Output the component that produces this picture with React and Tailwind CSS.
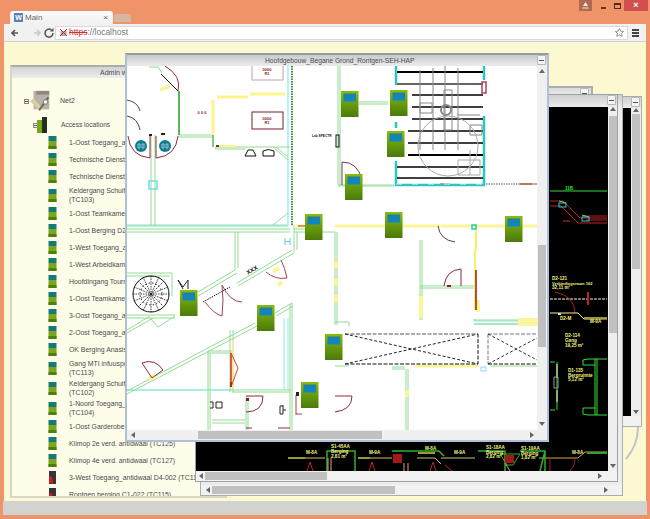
import React from "react";

const font = { fontFamily: '"Liberation Sans", Arial, sans-serif' };

const rows = [
  { t: ["1-Oost Toegang_antidwaal (TC101)"], h: "h-[17px]" },
  { t: ["Technische Dienst Toegang (TC105)"], h: "h-[17px]" },
  { t: ["Technische Dienst Berging (TC106)"], h: "h-[17px]" },
  { t: ["Keldergang Schuifdeur Noord", "(TC103)"], h: "h-[20px]" },
  { t: ["1-Oost Teamkamer (TC107)"], h: "h-[17px]" },
  { t: ["1-Oost Berging D2-112"], h: "h-[17px]" },
  { t: ["1-West Toegang_antidwaal"], h: "h-[17px]" },
  { t: ["1-West Arbeidkamer"], h: "h-[17px]" },
  { t: ["Hoofdingang Tourniquet"], h: "h-[17px]" },
  { t: ["1-Oost Teamkamer 2"], h: "h-[17px]" },
  { t: ["3-Oost Toegang_antidwaal"], h: "h-[17px]" },
  { t: ["2-Oost Toegang_antidwaal"], h: "h-[17px]" },
  { t: ["OK Berging Anasis"], h: "h-[17px]" },
  { t: ["Gang MTI infuuspomp", "(TC113)"], h: "h-[20px]" },
  { t: ["Keldergang Schuifdeur Zuid", "(TC102)"], h: "h-[20px]" },
  { t: ["1-Noord Toegang_antidwaal", "(TC104)"], h: "h-[20px]" },
  { t: ["1-Oost Garderobe"], h: "h-[17px]" },
  { t: ["Klimop 2e verd. antidwaal (TC125)"], h: "h-[17px]" },
  { t: ["Klimop 4e verd. antidwaal (TC127)"], h: "h-[17px]" },
  { t: ["3-West Toegang_antidwaal D4-002 (TC114)"], h: "h-[17px]", red: true },
  { t: ["Rontgen berging C1-022 (TC115)"], h: "h-[17px]", red: true },
];

function ControllerIcon({ red }) {
  return (
    <svg width="9" height="13" viewBox="0 0 9 13" className="shrink-0">
      {red ? (
        <>
          <rect x="1" y="0" width="7" height="13" fill="#3a3238" />
          <path d="M1 5 L4 6 L5 13 L1 12 Z" fill="#d81820" />
        </>
      ) : (
        <>
          <rect x="0.5" y="0" width="8" height="5" fill="#167a76" />
          <rect x="0.5" y="5" width="8" height="8" fill="#7ba51c" />
          <rect x="0.5" y="10" width="8" height="3" fill="#4f7d10" />
        </>
      )}
    </svg>
  );
}

function Minus() {
  return (
    <div className="w-[9px] h-[10px] bg-[#f4f4f4] border border-[#b8b8b8] rounded-[1px] flex items-center justify-center">
      <div className="w-[5px] h-[1px] bg-[#555]" />
    </div>
  );
}

function Tri({ dir }) {
  const p = { up: "0,4 3,0 6,4", down: "0,0 6,0 3,4", left: "4,0 4,6 0,3", right: "0,0 0,6 4,3" }[dir];
  return (
    <svg width="6" height="6" viewBox="0 0 6 6" className="shrink-0">
      <polygon points={p} fill="#666" />
    </svg>
  );
}

function Controller({ x, y }) {
  return (
    <g>
      <rect x={x} y={y} width="17.5" height="26" fill="url(#ctl)" />
      <rect x={x + 2.5} y={y + 2.5} width="12.5" height="8" fill="url(#scr)" />
    </g>
  );
}

const ctrls = [
  [341, 91], [390, 90], [387, 131], [345, 174], [385, 212], [505, 216], [305, 214],
  [180, 290], [257, 305], [325, 334], [301, 382],
];

const gL = [
  "M149 67H158L162 73", "M155 135V225M151 135V225", "M179 135H213M179 137H213", "M127 226H288", "M127 229H290M127 232H290",
  "M215 147H290M215 149H245", "M273 147L288 160M276 147L288 157", "M273 225L288 213", "M235 232V270M238 232V268",
  "M338 66V185M340 66V185", "M338 185H394M338 186H394", "M359 102H388M359 104H388",
  "M294 232H335M294 229H310", "M294 225V252M297 232V250",
  "M335 232V325M337 232V325", "M335 322L349 322V326", "M420 240V320M422 240V320", "M420 286H474M420 288H474",
  "M474 320H537M474 324H537", "M392 367H405M392 369H405", "M406 369V430M408 369V430", "M490 366H537", "M335 366H349",
  "M127 273H172V296M127 276H170", "M127 315H175M127 318H175", "M127 330L150 316M127 333L153 318", "M150 318L158 327L175 316",
  "M198 292L235 270M198 296L237 273", "M237 283L292 250M238 286L294 253",
  "M127 391L255 323M127 394L257 326", "M275 313L292 303M276 316L293 306",
  "M290 304V430M292 303V430", "M208 351H232M208 353H232", "M208 351V431M210 353V431", "M230 330V392M233 330V392", "M232 392H290M232 390H290",
  "M212 420H245M212 423H245", "M246 396V431M248 396V431",
];

export default function App() {
  return (
    <div style={font} className="w-[650px] h-[519px] bg-[#ef9468] overflow-hidden flex flex-col text-[#4b4b4b]">
      {/* title strip with tabs */}
      <div className="h-[24px] shrink-0 flex items-end justify-between pl-[10px] relative">
        <div className="flex items-end">
          <div className="w-[103px] h-[13px] bg-gradient-to-b from-[#fbfbfb] to-[#f1f1f1] rounded-t-[3px] flex items-center pl-[4px] gap-[2px]">
            <div className="w-[9px] h-[9px] bg-[#5b7fb5] text-white text-[7px] leading-[9px] text-center font-bold">W</div>
            <span className="text-[8px] text-[#666] flex-1">Main</span>
            <span className="text-[8px] text-[#555] mr-[5px]">×</span>
          </div>
          <div className="w-[17px] h-[8px] bg-[#d8b5a0] rounded-t-[2px] ml-[1px] mb-[2px]" />
        </div>
        <div className="absolute top-0 right-[2px] flex h-[11px] items-stretch">
          <div className="w-[13px] bg-[#b06a50] flex items-center justify-center mr-[5px]">
            <svg width="7" height="7" viewBox="0 0 7 7"><path d="M3.5 0L6 4H1Z M0.5 5.5H6.5V6.5H0.5Z" fill="#eee" /></svg>
          </div>
          <div className="w-[13px] flex items-end justify-center pb-[2px]"><div className="w-[5px] h-[2px] bg-[#7a2a10]" /></div>
          <div className="w-[14px] flex items-center justify-center"><div className="w-[7px] h-[6px] border border-[#5a2a18] border-t-2" /></div>
          <div className="w-[24px] bg-[#d34f4f] flex items-center justify-center text-white text-[9px] font-bold leading-none">×</div>
        </div>
      </div>

      {/* toolbar */}
      <div className="h-[18px] shrink-0 mx-[4px] bg-[#f1f1f1] flex items-center pl-[5px] pr-[3px] border-b border-[#cfcfcf]">
        <svg width="46" height="12" viewBox="0 0 46 12" className="shrink-0">
          <path d="M9 6H3M6 3L3 6L6 9" fill="none" stroke="#555" strokeWidth="1.6" />
          <path d="M25 6H31M28 3L31 6L28 9" fill="none" stroke="#c9c9c9" strokeWidth="1.6" />
          <path d="M44 6A4 4 0 1 1 42.5 3" fill="none" stroke="#555" strokeWidth="1.5" />
          <path d="M44.5 1V4.5H41Z" fill="#555" />
        </svg>
        <div className="w-[573px] h-[14px] bg-white border border-[#d8d8d8] flex items-center pl-[3px] pr-[2px] gap-[1px]">
          <svg width="9" height="9" viewBox="0 0 9 9" className="shrink-0">
            <rect x="1.5" y="3" width="6" height="5" fill="#aaa" />
            <path d="M1 1L8 8M8 1L1 8" stroke="#c22" strokeWidth="1" />
          </svg>
          <span className="text-[8.5px] leading-none text-[#777] flex-1">
            <span className="text-[#c33] line-through">https</span>://localhost
          </span>
          <svg width="11" height="11" viewBox="0 0 24 24" className="shrink-0">
            <path d="M12 3l2.8 6 6.4.7-4.8 4.3 1.4 6.4L12 17l-5.8 3.4 1.4-6.4L2.8 9.7 9.200 9z" fill="none" stroke="#888" strokeWidth="2" />
          </svg>
        </div>
        <div className="flex flex-col gap-[1px] ml-[4px]">
          <div className="w-[7px] h-[2px] bg-[#444]" />
          <div className="w-[7px] h-[2px] bg-[#444]" />
          <div className="w-[7px] h-[2px] bg-[#444]" />
        </div>
      </div>

      {/* page */}
      <div className="flex-1 min-h-0 mx-[4px] bg-[#fcf9d2] relative pl-[6px] pt-[23px] pr-[6px] overflow-hidden">
        {/* admin */}
        <div className="h-[433px] w-[217px] border-2 border-[#d4d6cf] border-t-[#a8aeae] bg-[#fdfdea] overflow-hidden">
          <div className="h-[11px] bg-gradient-to-b from-[#d2d2d2] to-[#eeeeee] pl-[88px] text-[7px] leading-[11px] whitespace-nowrap">Admin window</div>
          <div className="h-[30px] mt-[8px] flex items-center pl-[12px]">
            <div className="w-[5px] h-[5px] border border-[#888] flex items-center justify-center shrink-0"><div className="w-[3px] h-[1px] bg-[#555]" /></div>
            <svg width="24" height="25" viewBox="0 0 26 25" className="shrink-0 -ml-[1px]">
              <rect x="6" y="1" width="17" height="20" fill="#b9b2a4" />
              <rect x="9" y="1" width="14" height="4" fill="#8f8a80" />
              <path d="M2 12L13 23L16 20L6 9Z" fill="#d9cfa2" />
              <path d="M22 8L12 22" stroke="#666" strokeWidth="2" />
              <circle cx="19" cy="13" r="2.500" fill="#eee" stroke="#777" />
            </svg>
            <span className="ml-[8px] text-[7px]">Net2</span>
          </div>
          <div className="h-[18px] flex items-center pl-[21px]">
            <div className="w-[5px] h-[5px] border border-[#888] flex items-center justify-center shrink-0"><div className="w-[3px] h-[1px] bg-[#555]" /></div>
            <svg width="10" height="16" viewBox="0 0 10 16" className="shrink-0 -ml-[1px]">
              <rect x="0" y="3" width="6" height="13" fill="#77a81c" />
              <rect x="5" y="0" width="5" height="16" fill="#26301e" />
            </svg>
            <span className="ml-[14px] text-[6.6px]">Access locations</span>
          </div>
          {rows.map((r, i) => (
            <div key={i} className={`${r.h} flex items-center pl-[36px]`}>
              <ControllerIcon red={r.red} />
              <div className="ml-[12px] text-[6.9px] leading-[9px] whitespace-nowrap">
                {r.t.map((l) => (
                  <div key={l}>{l}</div>
                ))}
              </div>
            </div>
          ))}
        </div>

        {/* decorative arc behind the windows */}
        <svg className="absolute left-[610px] top-[375px]" width="34" height="50" viewBox="0 0 34 50">
          <path d="M24 10Q24 28 12 42" fill="none" stroke="#bcc6c8" strokeWidth="2" />
        </svg>

        {/* back window, top strip */}
        <div className="absolute left-[296px] top-[44px] w-[293px] h-[200px] border-2 border-[#a9afae] bg-[#ececec]">
          <div className="h-[12px] bg-gradient-to-b from-[#dcdcdc] to-[#f1f1f1] flex justify-end pr-[2px]"><Minus /></div>
        </div>

        {/* far right window */}
        <div className="absolute left-[396px] top-[54px] w-[242px] h-[331px] border border-[#a9afae] bg-[#ececec] flex flex-col">
          <div className="h-[11px] shrink-0 bg-gradient-to-b from-[#cfcfcf] to-[#ececec] flex justify-end pr-[1px]"><Minus /></div>
          <div className="flex-1 min-h-0 flex pr-[1px]">
            <div className="flex-1 bg-black" />
            <div className="w-[9px] bg-[#eeeeee] flex flex-col items-center">
              <Tri dir="up" />
              <div className="w-[8px] h-[155px] bg-[#c0c0c0]" />
              <div className="flex-1" />
              <Tri dir="down" />
            </div>
          </div>
          <div className="h-[10px] shrink-0 bg-[#f2f2f2]" />
        </div>

        {/* third window */}
        <div className="absolute left-[196px] top-[52px] w-[423px] h-[402px] border border-[#a9afae] bg-[#ececec] flex flex-col">
          <div className="h-[12px] shrink-0 bg-gradient-to-b from-[#cfcfcf] to-[#ececec]" />
          <div className="flex-1 min-h-0 flex">
            <div className="flex-1" />
            <div className="w-[9px] pt-[78px]"><div className="w-[5px] h-[102px] bg-[#c8c8c8]" /></div>
          </div>
          <div className="h-[10px] shrink-0 bg-[#f2f2f2] flex items-center pl-[5px]">
            <Tri dir="left" />
            <div className="w-[183px] h-[8px] bg-[#c0c0c0]" />
            <div className="flex-1" />
            <div className="mr-[12px]"><Tri dir="right" /></div>
          </div>
        </div>

        {/* black drawing window */}
        <div className="absolute left-[191px] top-[52px] w-[423px] h-[388px] border border-[#9aa3a5] bg-[#ececec] flex flex-col">
          <div className="h-[12px] shrink-0 bg-gradient-to-b from-[#cfcfcf] to-[#ececec] flex justify-end pr-[1px]"><Minus /></div>
          <div className="flex-1 min-h-0 flex">
            <svg width="412" height="364" viewBox="196 107 412 364" className="bg-black shrink-0" style={font}>
              <g fill="none">
                <path d="M550 191H607" stroke="#35e035" />
                <path d="M550 201H563L580 218H607M550 206H561L578 223H607" stroke="#c02424" />
                <path d="M582 216H607M586 220H607" stroke="#b02020" />
                <rect x="559" y="203" width="7" height="4" stroke="#35c5d5" />
                <rect x="582" y="217" width="7" height="4" stroke="#35c5d5" />
                <path d="M559 201L566 203M582 215L589 217" stroke="#5ce05c" />
                <path d="M563 221H570" stroke="#d03030" />
                <path d="M550 299H607" stroke="#f6f6f6" strokeDasharray="3 1" />
                <path d="M555 292Q575 296 575 313" stroke="#b02020" />
                <path d="M588 292V305" stroke="#c02020" strokeWidth="2" />
                <path d="M550 313H578L584 319H607" stroke="#f0f0a0" />
                <path d="M584 318H607" stroke="#9a9a30" strokeWidth="2" />
                <path d="M595 359V415M597 359V415" stroke="#35e035" />
                <path d="M607 359H588L583 360V365H595M607 415H588L583 414V408H595" stroke="#35e035" />
                <path d="M557 362V410M555 410H550M555 362H550" stroke="#35e035" />
                <path d="M557 364V378M557 390V402" stroke="#eee" strokeWidth="1" />
                <path d="M554 377H558V388H554Z" stroke="#99a" />
                <path d="M539 458H578L585 452H607" stroke="#d0a840" />
                <path d="M587 453H607" stroke="#2f9f2f" strokeWidth="2" />
                <path d="M550 458V471M575 458Q575 466 570 471" stroke="#a01c1c" />
                <path d="M288 458H325M358 458H392M417 458H435L441 464M441 458H475" stroke="#d0c078" />
                <path d="M288 458H305M358 458H370M418 453H435" stroke="#9a9a30" strokeWidth="2" />
                <path d="M327 471V451H355V471" stroke="#2faf2f" strokeWidth="1.500" />
                <path d="M392 451H439L444 456M478 451H505V471M520 451H545V471M545 451L540 471" stroke="#2faf2f" strokeWidth="1.500" />
                <path d="M328 458V471M331 458V471M404 463V471M408 463V471M505 463L510 471" stroke="#e0a080" />
                <path d="M307 471L310 462L313 471M369 471L372 462L375 471M430 471L433 462L436 471M445 465L452 471" stroke="#c02020" />
                <path d="M500 454H520L513 465H507Z" stroke="#2faf2f" />
              </g>
              <rect x="393" y="454" width="9" height="9" fill="#a01818" />
              <rect x="505" y="455" width="9" height="8" fill="#a01818" />
              <rect x="558" y="313" width="3" height="2" fill="#ddd" />
              <g fill="#f4f480" fontSize="4.600" fontWeight="bold">
                <text x="552" y="280">D2-121</text>
                <text x="552" y="284.500" fontSize="4">Verbindingsraum 162</text>
                <text x="552" y="289">32,11 m²</text>
                <text x="565" y="337">D2-114</text>
                <text x="565" y="342">Gang</text>
                <text x="565" y="347">19,25 m²</text>
                <text x="568" y="372">D1-135</text>
                <text x="568" y="377">Bergruimte</text>
                <text x="568" y="381">5,12 m²</text>
                <text x="560" y="320">D2-M</text>
                <text x="590" y="323">M-9A</text>
                <text x="331" y="448">S1-45AA</text>
                <text x="331" y="453">Berging</text>
                <text x="331" y="458">2,81 m²</text>
                <text x="306" y="454">M-8A</text>
                <text x="369" y="454">M-9A</text>
                <text x="425" y="450">M-8A</text>
                <text x="454" y="454">M-9A</text>
                <text x="486" y="449">S1-18AA</text>
                <text x="486" y="454">Berging</text>
                <text x="486" y="458">2,82 m²</text>
                <text x="521" y="450">S1-19AA</text>
                <text x="521" y="455">Berging</text>
                <text x="521" y="459">1,82 m²</text>
                <text x="572" y="454">M-8A</text>
              </g>
              <text x="565" y="190" fill="#40e040" fontSize="4.600" fontWeight="bold">11B</text>
            </svg>
            <div className="w-[9px] bg-[#eeeeee] flex flex-col items-center">
              <Tri dir="up" />
              <div className="w-[8px] h-[217px] bg-[#c0c0c0] mt-[3px]" />
              <div className="flex-1" />
              <div className="mb-[1px]"><Tri dir="down" /></div>
            </div>
          </div>
          <div className="h-[10px] shrink-0 bg-[#f2f2f2] flex items-center pl-[3px]">
            <Tri dir="left" />
            <div className="w-[122px] h-[8px] bg-[#c0c0c0]" />
            <div className="flex-1" />
            <div className="mr-[13px]"><Tri dir="right" /></div>
          </div>
        </div>

        {/* main floor plan window */}
        <div className="absolute left-[121px] top-[11px] w-[424px] h-[389px] border-2 border-[#aebfd8] border-t-[#8f9ea2] bg-[#ececec] flex flex-col">
          <div className="h-[11px] shrink-0 bg-gradient-to-b from-[#c9c9c9] to-[#ececec] relative pl-[138px] text-[6.7px] leading-[11px] whitespace-nowrap">
            Hoofdgebouw_Begane Grond_Rontgen-SEH-HAP
            <div className="absolute right-[1px] top-0"><Minus /></div>
          </div>
          <div className="flex-1 min-h-0 flex">
            <svg width="410" height="365" viewBox="127 66 410 365" className="bg-white shrink-0" style={font}>
              <defs>
                <linearGradient id="ctl" x1="0" y1="0" x2="0" y2="1">
                  <stop offset="0" stopColor="#86bd10" />
                  <stop offset="1" stopColor="#4a7a0a" />
                </linearGradient>
                <linearGradient id="scr" x1="0" y1="0" x2="0" y2="1">
                  <stop offset="0" stopColor="#1f7f9f" />
                  <stop offset="1" stopColor="#0a88cc" />
                </linearGradient>
              </defs>
              <g fill="none">
                {/* light cyan walls */}
                <path d="M288 66V225H127" stroke="#9ff0f0" strokeWidth="1.500" />
                <rect x="149" y="181" width="8" height="8" stroke="#66e0e8" strokeWidth="1.500" />
                <path d="M127 390H232" stroke="#88e8e0" strokeWidth="1.500" />
                <path d="M284 318V390M288 318V390" stroke="#88e8f0" />
                <path d="M474 321V319" stroke="#66e0e8" />
                <path d="M474 321H520M474 324H520" stroke="#88e0e0" />
                {/* green walls */}
                {gL.map((d, i) => (
                  <path key={i} d={d} stroke="#93dc93" />
                ))}
                <path d="M179 91V135" stroke="#57b957" strokeWidth="2" />
                <path d="M213 135V147" stroke="#57b957" strokeWidth="1.500" />
                <path d="M292 66V225" stroke="#3e8f3e" strokeWidth="2" strokeDasharray="1.500 1" />
                {/* yellow */}
                <path d="M213 100V135M217 97H248M250 94H285" stroke="#fdf58a" strokeWidth="3" />
                <path d="M216 146H236" stroke="#fdf58a" strokeWidth="2" />
                <path d="M296 226H305M335 226H537" stroke="#fbf59a" strokeWidth="3" />
                <path d="M475 250V310M476 226V250" stroke="#fbf060" strokeWidth="2" />
                <path d="M518 322H537" stroke="#fbf59a" strokeWidth="8" />
                <path d="M415 366H478" stroke="#fbf59a" strokeWidth="3" />
                <path d="M336 262V268M336 279V285M336 295V302M421 296V318M407 390V397M478 300V312" stroke="#fbf59a" strokeWidth="4" />
                <path d="M149 379L156 375M273 272L279 268M278 285L282 282M160 90L170 86" stroke="#fbf59a" strokeWidth="4" />
                <path d="M233 340V388" stroke="#fbe8a0" strokeWidth="2" />
                {/* doors */}
                <path d="M161 74L178 91" stroke="#111" />
                <path d="M165 66Q182 76 178 91" stroke="#8e2a35" />
                <path d="M127 100Q138 102 140 111M127 116Q138 118 140 130" stroke="#6d3a40" />
                <path d="M128 136Q130 156 150 158V136M156 136V158Q176 156 178 136" stroke="#8e2a35" />
                <path d="M342 185V162Q358 162 362 180" stroke="#6d3a40" />
                <path d="M203 302L230 287" stroke="#111" strokeDasharray="1.500 1" />
                <path d="M205 302Q214 314 222 316Q224 300 222 285Q230 302 242 302" stroke="#a04550" />
                <path d="M266 272Q275 280 287 278Q285 268 281 260" stroke="#a04550" />
                <path d="M142 363Q155 358 163 370L152 378Z" stroke="#8e2a35" />
                <path d="M246 396H263Q263 412 246 412" stroke="#8e2a35" />
                <path d="M246 428H252M278 428H290" stroke="#8e2a35" />
                <path d="M296 395V415M296 414H302" stroke="#a04550" />
                <path d="M438 226Q440 240 455 242" stroke="#6d3a40" />
                <path d="M444 286Q446 270 461 269V286" stroke="#8e2a35" />
                <path d="M335 396H352Q352 410 335 412" stroke="#8e2a35" />
                <path d="M231 353V387L238 368Z" stroke="#d04a28" />
                <path d="M231 353V387" stroke="#d04a28" strokeWidth="1.500" />
                <path d="M476 270V310" stroke="#a01818" strokeWidth="1.500" />
                <path d="M298 226H305M440 184H450M520 184H532" stroke="#b03a20" />
                {/* pink rooms */}
                <rect x="252" y="60" width="31" height="20" stroke="#c8a0a8" />
                <rect x="252" y="112" width="31" height="17" stroke="#7a1e2a" />
                {/* black fixtures */}
                <path d="M245 156L248 150H253L256 156ZM263 151Q268 148 274 151V156H263Z" stroke="#111" />
                <path d="M178 280L183 289M188 280V289M178 280L183 287L188 280" stroke="#222" />
                <rect x="336" y="135" width="3" height="12" stroke="#111" />
                <path d="M210 402H213V408H210M216 402H222V408H216Z" stroke="#222" />
                <path d="M283 406H280V414H283M283 405V414M286 410H283" stroke="#222" />
                {/* teal room */}
                <path d="M396 66V85M396 122V128M396 161V185H484V116M484 66V80" stroke="#28c8c0" strokeWidth="2.500" />
                <path d="M396 184H484" stroke="#fff" strokeWidth="0.800" strokeDasharray="6 10" />
                {/* bars */}
                <path d="M397 72H483M408 155H483" stroke="#000" strokeWidth="2" />
                <path d="M397 84H483" stroke="#6d625a" strokeWidth="2" />
                <path d="M412 95H483M412 107H483M412 119H483M408 131H483M408 143H483M397 167H483M397 178H483" stroke="#000" strokeWidth="1.300" />
                <path d="M420 70V150M433 68V150M445 66V150M458 68V150" stroke="#888" />
                <path d="M420 103H432V113H420ZM444 90H452V130H444ZM458 115H480M470 125H482V135H470Z" stroke="#888" />
                <circle cx="446" cy="110" r="5" stroke="#888" strokeWidth="2" />
                <circle cx="448" cy="146" r="30" stroke="#aaa" />
                <path d="M458 160H480V175H458ZM470 150V175" stroke="#aaa" />
                <path d="M482 82H486V93H482Z" stroke="#b04060" strokeWidth="1.500" />
                <path d="M486 184H520" stroke="#5a4a40" strokeDasharray="1.500 1" />
                <path d="M520 184H537" stroke="#a05040" />
                {/* dashed void */}
                <path d="M345 334H478" stroke="#555" strokeDasharray="4 1.500" />
                <path d="M345 364H478V334" stroke="#111" strokeDasharray="4 1.500" />
                <path d="M345 334L478 364M345 364L478 334" stroke="#222" strokeDasharray="3 2" />
                <path d="M488 334H537M488 334V364" stroke="#777" strokeDasharray="4 1.500" />
                <path d="M488 364H537" stroke="#111" strokeDasharray="4 1.500" />
                <path d="M488 334L537 360M488 364L537 338" stroke="#333" strokeDasharray="3 2" />
                <rect x="481" y="367" width="5" height="4" stroke="#88dce8" />
                <rect x="472" y="225" width="4" height="4" stroke="#28c8c0" strokeWidth="1.500" />
                <path d="M285 238V245M290 238V245M285 241.500H290" stroke="#66c8e0" />
                {/* spiral stairs */}
                <circle cx="151" cy="294" r="18" stroke="#111" />
                <circle cx="151" cy="294" r="11" stroke="#111" strokeDasharray="1.500 2" />
                <path d="M151 276V312M133 294H169M138 281L164 307M164 281L138 307M143 277L159 311M159 277L143 311M134 287L168 301M134 301L168 287" stroke="#111" strokeDasharray="1.500 1" strokeWidth="0.800" />
              </g>
              <circle cx="141" cy="146" r="6" fill="#0f7f90" />
              <circle cx="165" cy="146" r="6" fill="#0f7f90" />
              <path d="M138 144H140V148H138ZM142 144H144V148H142ZM162 144H164V148H162ZM166 144H168V148H166Z" fill="none" stroke="#cde" strokeWidth="0.700" />
              <rect x="161" y="133" width="4" height="2" fill="#222" />
              <rect x="149" y="134" width="3" height="2" fill="#222" />
              <rect x="216" y="145" width="3" height="2" fill="#8a2a20" />
              <rect x="447" y="285" width="4" height="2" fill="#8a2020" />
              <rect x="246" y="398" width="3" height="3" fill="#8a2020" />
              <rect x="296" y="392" width="3" height="4" fill="#222" />
              <rect x="230" y="382" width="2" height="5" fill="#a03018" />
              <g fill="#8a1c2a" fontSize="4" fontWeight="bold" textAnchor="middle">
                <text x="267" y="71">0000</text>
                <text x="267" y="75">R1</text>
                <text x="267" y="120">0000</text>
                <text x="267" y="124">R1</text>
                <text x="202" y="114">0 0 0</text>
              </g>
              <text x="312" y="137" fontSize="3.200" fontWeight="bold" fill="#111">Lab SPECTR</text>
              <g transform="rotate(-30 252 270)"><text x="246" y="272" fontSize="6" fontWeight="bold" fill="#111">XXX</text></g>
              {ctrls.map(([x, y]) => (
                <Controller key={`${x}-${y}`} x={x} y={y} />
              ))}
            </svg>
            <div className="flex-1 flex flex-col items-center bg-[#f0f0f0]">
              <div className="mt-[3px]"><Tri dir="up" /></div>
              <div className="w-[8px] h-[102px] bg-[#c0c0c0] mt-[170px]" />
              <div className="flex-1" />
              <div className="mb-[2px]"><Tri dir="down" /></div>
            </div>
          </div>
          <div className="h-[10px] shrink-0 bg-[#f0f0f0] flex items-center pl-[4px]">
            <Tri dir="left" />
            <div className="w-[184px] h-[8px] bg-[#c0c0c0] ml-[61px]" />
            <div className="flex-1" />
            <div className="mr-[11px]"><Tri dir="right" /></div>
          </div>
        </div>
      </div>

      {/* status band */}
      <div className="h-[14px] shrink-0 mx-[3px] bg-[#d2d2ce]" />
      <div className="h-[4px] shrink-0" />
    </div>
  );
}
